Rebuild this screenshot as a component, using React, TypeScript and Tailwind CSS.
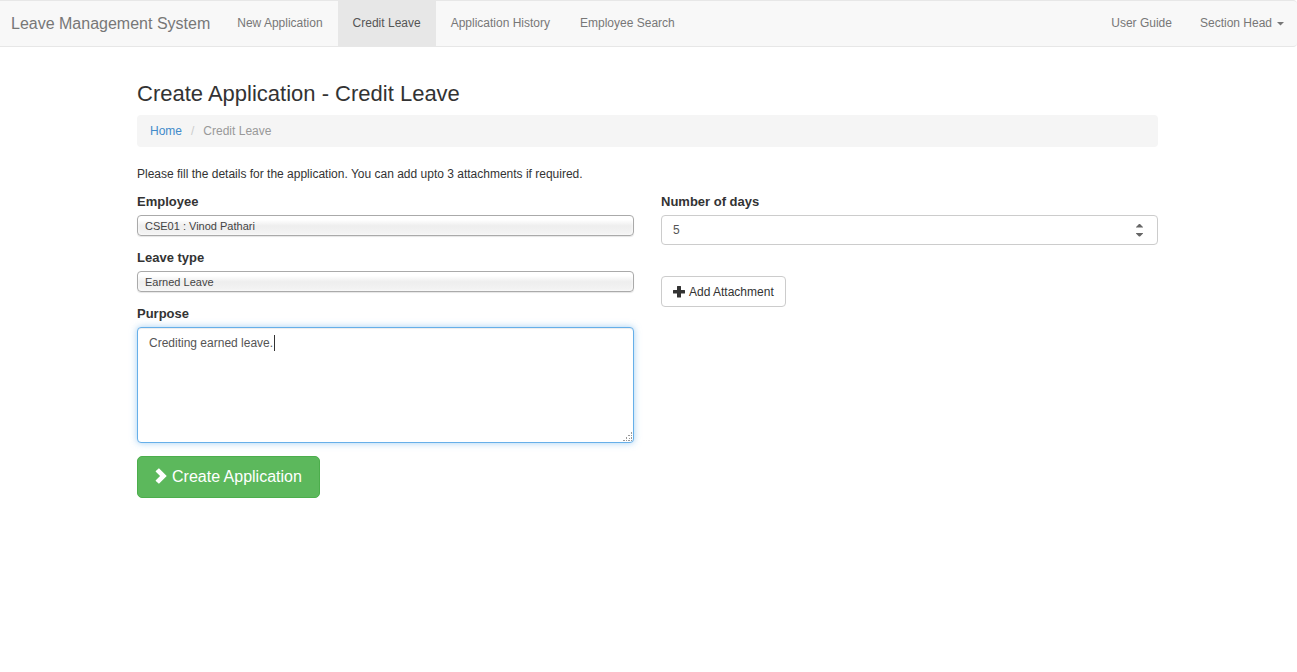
import { useState } from "react";

const navLinks = [
  { label: "New Application", active: false },
  { label: "Credit Leave", active: true },
  { label: "Application History", active: false },
  { label: "Employee Search", active: false },
];

const labelClass = "mb-1 block text-[13px] leading-[18px] font-bold";

const selectClass =
  "block h-[21px] w-full appearance-none rounded-[4px] border border-[#aaa] bg-linear-to-b from-white from-20% via-[#eee] via-52% to-[#f4f4f4] px-[7px] pt-0.5 text-[11px] leading-[17px] text-[#444] shadow-[0_1px_1px_rgba(0,0,0,0.1),inset_0_0_3px_#fff]";

function Navbar() {
  return (
    <nav className="flex h-[47px] items-stretch justify-between rounded-r-[4px] border-y border-[#e7e7e7] bg-[#f8f8f8] text-[#777]">
      <div className="flex items-stretch">
        <a href="#" className="flex items-center pr-[12px] pl-[11px] text-[16px]">
          Leave Management System
        </a>
        <ul className="-mb-px flex items-stretch">
          {navLinks.map((link) => (
            <li key={link.label} className="flex">
              <a
                href="#"
                className={
                  link.active
                    ? "flex items-center bg-[#e7e7e7] px-[15px] pb-0.5 text-[#555]"
                    : "flex items-center px-[15px] pb-0.5"
                }
              >
                {link.label}
              </a>
            </li>
          ))}
        </ul>
      </div>
      <div className="flex items-stretch pb-px">
        <a href="#" className="flex items-center px-[15px]">
          User Guide
        </a>
        <button type="button" className="flex items-center gap-[5px] px-[13px]">
          Section Head
          <svg width="7" height="4" viewBox="0 0 7 4" className="mt-0.5" aria-hidden="true">
            <path d="M0 0h7L3.5 3.5z" fill="#777" />
          </svg>
        </button>
      </div>
    </nav>
  );
}

export default function App() {
  const [purpose, setPurpose] = useState("Crediting earned leave.");
  const [days, setDays] = useState(5);

  return (
    <div className="font-['Liberation_Sans',Arial,sans-serif] text-[12px] leading-[18px] text-[#333]">
      <Navbar />
      <main className="mx-auto mt-[34px] w-full max-w-[1023px] pr-0.5">
        <h1 className="text-[22px] leading-[25px]">Create Application - Credit Leave</h1>
        <ol className="mt-[9px] flex h-8 items-center rounded-[4px] bg-[#f5f5f5] px-[13px]">
          <li>
            <a href="#" className="text-[#428bca]">
              Home
            </a>
          </li>
          <li aria-hidden="true" className="px-[9px] text-[#ccc]">
            /
          </li>
          <li className="text-[#999]">Credit Leave</li>
        </ol>
        <p className="mt-[18px]">
          Please fill the details for the application. You can add upto 3 attachments if required.
        </p>

        <form className="mt-[10px]" onSubmit={(e) => e.preventDefault()}>
          <div className="grid grid-cols-2 items-start gap-[27px]">
            <div className="flex flex-col gap-[13px]">
              <div>
                <label htmlFor="employee" className={labelClass}>
                  Employee
                </label>
                <select id="employee" className={selectClass}>
                  <option>CSE01 : Vinod Pathari</option>
                </select>
              </div>
              <div>
                <label htmlFor="type" className={labelClass}>
                  Leave type
                </label>
                <select id="type" className={selectClass}>
                  <option>Earned Leave</option>
                </select>
              </div>
              <div>
                <label htmlFor="purpose" className={labelClass}>
                  Purpose
                </label>
                <div className="relative">
                  <textarea
                    id="purpose"
                    value={purpose}
                    onChange={(e) => setPurpose(e.target.value)}
                    className="block h-[116px] w-full resize-none rounded-[4px] border border-[#66afe9] bg-white px-[11px] py-[6px] text-[#555] shadow-[inset_0_1px_1px_rgba(0,0,0,0.075),0_0_7px_rgba(102,175,233,0.6)] outline-none"
                  />
                  <span className="absolute top-2 left-[137px] h-4 w-px bg-[#333]" />
                  <svg
                    width="10"
                    height="10"
                    viewBox="0 0 10 10"
                    className="absolute right-px bottom-px"
                    fill="#999"
                    shapeRendering="crispEdges"
                    aria-hidden="true"
                  >
                    <path d="M8 0h1v2h-1zM8 3h1v1h-1zM5 3h2v1h-2zM8 5h1v2h-1zM6 6h1v1h-1zM3 5h1v2h-1zM8 8h1v1h-1zM5 8h2v1h-2zM3 8h1v1h-1zM0 8h2v1h-2z" />
                  </svg>
                </div>
              </div>
            </div>

            <div>
              <label htmlFor="days" className={labelClass}>
                Number of days
              </label>
              <div className="relative">
                <input
                  id="days"
                  type="number"
                  value={days}
                  onChange={(e) => setDays(Number(e.target.value))}
                  className="block h-[30px] w-full rounded-[4px] border border-[#ccc] bg-white px-[11px] pb-px text-[#555] [appearance:textfield]"
                />
                <svg
                  width="7"
                  height="13"
                  viewBox="0 0 7 13"
                  className="pointer-events-none absolute top-[9px] right-[15px]"
                  fill="#666"
                  aria-hidden="true"
                >
                  <path d="M3 0h1L7 3v.5H0V3zM0 9h7v.5L4 12.500H3L0 9.500z" />
                </svg>
              </div>
              <button
                type="button"
                className="mt-[31px] flex h-[31px] items-center gap-1 rounded-[4px] border border-[#ccc] bg-white px-[11px]"
              >
                <svg width="12" height="12" viewBox="0 0 12 12" fill="#333" aria-hidden="true">
                  <path d="M4.500 0h3q.5 0 .5.500V4h3.500q.5 0 .5.500v2.500q0 .5-.5.500H8v3.500q0 .5-.5.500h-3q-.5 0-.5-.5V7.500H.5q-.5 0-.5-.5V4.500q0-.5.500-.5H4V.5q0-.5.500-.5z" />
                </svg>
                Add Attachment
              </button>
            </div>
          </div>

          <button
            type="submit"
            className="mt-[13px] flex h-[42px] items-center gap-[5px] rounded-[5px] border border-[#4cae4c] bg-[#5cb85c] px-[17px] text-[16px] text-white"
          >
            <svg width="12" height="18" viewBox="0 0 12 18" fill="#fff" aria-hidden="true">
              <path d="M4.200.4L11.500 7.700q.3.300 0 .6L4.200 15.600q-.3.300-.6 0L.8 12.900q-.3-.3 0-.6L5.100 8 .8 3.700q-.3-.3 0-.6L3.600.4q.3-.3.6 0z" />
            </svg>
            Create Application
          </button>
        </form>
      </main>
    </div>
  );
}
